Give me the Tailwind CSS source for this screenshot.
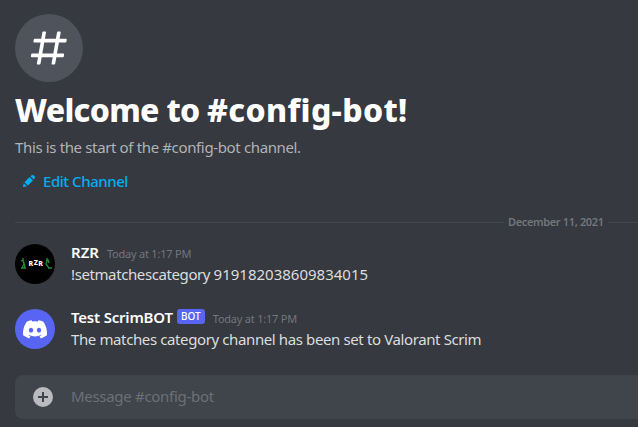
<!DOCTYPE html>
<html lang="en">
<head>
<meta charset="utf-8">
<title>config-bot</title>
<script src="https://cdn.jsdelivr.net/npm/@tailwindcss/browser@4"></script>
</head>
<body class="h-[427px] w-[638px] overflow-hidden bg-[#36393f] font-['Noto_Sans','Open_Sans',sans-serif] whitespace-nowrap">
<main class="flex h-full flex-col pt-[14px] pl-[15px]">
  <div class="flex size-[68px] shrink-0 items-center justify-center rounded-full bg-[#4f545c]">
    <svg class="size-[44px]" viewBox="0 0 24 24" fill="#fff"><path fill-rule="evenodd" clip-rule="evenodd" d="M5.88657 21C5.57547 21 5.3399 20.7189 5.39427 20.4126L6.00001 17H2.59511C2.28449 17 2.04905 16.7198 2.10259 16.4138L2.27759 15.4138C2.31946 15.1746 2.52722 15 2.77011 15H6.35001L7.41001 9H4.00511C3.69449 9 3.45905 8.71977 3.51259 8.41381L3.68759 7.41381C3.72946 7.17456 3.93722 7 4.18011 7H7.76001L8.39677 3.41262C8.43914 3.17391 8.64664 3 8.88907 3H9.87344C10.1845 3 10.4201 3.28107 10.3657 3.58738L9.76001 7H15.76L16.3968 3.41262C16.4391 3.17391 16.6466 3 16.8891 3H17.8734C18.1845 3 18.4201 3.28107 18.3657 3.58738L17.76 7H21.1649C21.4755 7 21.711 7.28023 21.6574 7.58619L21.4824 8.58619C21.4406 8.82544 21.2328 9 20.9899 9H17.41L16.35 15H19.7549C20.0655 15 20.301 15.2802 20.2474 15.5862L20.0724 16.5862C20.0306 16.8254 19.8228 17 19.5799 17H16L15.3632 20.5874C15.3209 20.8261 15.1134 21 14.8709 21H13.8866C13.5755 21 13.3399 20.7189 13.3943 20.4126L14 17H8.00001L7.36325 20.5874C7.32088 20.8261 7.11337 21 6.87094 21H5.88657ZM9.41001 9L8.35001 15H14.35L15.41 9H9.41001Z"/></svg>
  </div>
  <h1 class="mt-2 h-10 shrink-0 text-[32px] leading-[40px] font-extrabold text-white"><span class="tracking-[-0.7px]">Welcome to </span><span class="tracking-[0.35px]">#config-bot!</span></h1>
  <p class="mt-[7px] h-5 shrink-0 text-[15px] leading-5 text-[#b0b3b7]"><span class="tracking-[-0.36px]">This is the start of the #config-bot channel.</span></p>
  <div class="mt-[14px] flex h-5 shrink-0 items-center pl-[6px] text-[15px] leading-5 font-medium text-[#00aff4]">
    <svg class="mr-[6px] size-4" viewBox="0 0 24 24" fill="currentColor"><path fill-rule="evenodd" clip-rule="evenodd" d="M19.2929 9.8299L19.9409 9.18278C21.353 7.77064 21.353 5.47197 19.9409 4.05892C18.5287 2.64678 16.2292 2.64678 14.817 4.05892L14.1699 4.70694L19.2929 9.8299ZM12.8962 5.97688L5.18469 13.6906L10.3085 18.813L18.0201 11.0992L12.8962 5.97688ZM4.11851 20.9704L8.75906 19.8112L4.18692 15.239L3.02678 19.8796C2.95028 20.1856 3.04028 20.5105 3.26349 20.7337C3.48669 20.9569 3.8116 21.046 4.11851 20.9704Z"/></svg>
    <span class="tracking-[-0.45px]">Edit Channel</span>
  </div>
  <div class="mt-[24px] flex h-[14px] shrink-0 items-center text-[11px] leading-[14px] font-semibold text-[#72767d]">
    <i class="mr-1 h-px w-[489px] bg-[#42454a]"></i><span class="w-[96px] tracking-[-0.35px]">December 11, 2021</span><i class="ml-1 h-px flex-1 bg-[#42454a]"></i>
  </div>
  <article class="mt-[12px] flex h-[44px] shrink-0">
    <svg class="mt-[3px] mr-4 size-10 shrink-0" viewBox="0 0 40 40"><circle cx="20" cy="20" r="20" fill="#000"/><g font-family="Noto Sans, sans-serif" font-size="7" font-weight="800" fill="#fff"><text x="13.5" y="22">R</text><text x="18.7" y="21">Z</text><text x="23.2" y="21.5">R</text></g><g fill="none" stroke="#238b3c" stroke-width="1.3"><path d="M8 14v3l1 3-2 4M9 19l1 5M6 17l2-1 1 3M6 24h5"/><path d="M32 14v3l-1 3 3 4M31 17l2-1 1 3M33 24h4"/></g></svg>
    <div>
      <div class="flex h-[22px] items-baseline text-[15px] leading-[22px]"><span class="font-semibold text-white">RZR</span><time class="ml-2 text-[11px] text-[#72767d] tracking-[-0.22px]">Today at 1:17 PM</time></div>
      <p class="h-[22px] text-[15px] leading-[22px] text-[#dcddde]"><span class="tracking-[-0.4px]">!setmatchescategory </span><span class="tracking-[0px]">919182038609834015</span></p>
    </div>
  </article>
  <article class="mt-[21px] flex h-[44px] shrink-0">
    <svg class="mt-[3px] mr-4 size-10 shrink-0" viewBox="0 0 40 40"><circle cx="20" cy="20" r="20" fill="#5865f2"/><g transform="translate(8 11.2) scale(.189)"><path fill="#fff" d="M107.7 8.07A105.15 105.15 0 0 0 81.47 0a72.06 72.06 0 0 0-3.36 6.83 97.68 97.68 0 0 0-29.11 0A72.37 72.37 0 0 0 45.64 0 105.89 105.89 0 0 0 19.39 8.09C2.79 32.65-1.71 56.6.54 80.21a105.73 105.73 0 0 0 32.17 16.15 77.7 77.7 0 0 0 6.89-11.11 68.42 68.42 0 0 1-10.85-5.18c.91-.66 1.8-1.34 2.66-2a75.57 75.57 0 0 0 64.32 0c.87.71 1.76 1.39 2.66 2a68.68 68.68 0 0 1-10.87 5.19 77 77 0 0 0 6.89 11.1 105.25 105.25 0 0 0 32.19-16.14c2.64-27.38-4.51-51.11-18.9-72.15ZM42.45 65.69C36.18 65.69 31 60 31 53s5-12.74 11.43-12.74S54 46 53.89 53s-5.05 12.69-11.44 12.69Zm42.24 0C78.41 65.69 73.25 60 73.25 53s5-12.74 11.44-12.74S96.23 46 96.12 53s-5.04 12.69-11.43 12.69Z"/></g></svg>
    <div>
      <div class="flex h-[22px] items-baseline text-[15px] leading-[22px]"><span class="font-semibold text-white tracking-[-0.2px]">Test ScrimBOT</span><span class="mt-[3px] ml-1 h-[15px] w-[28px] self-start rounded-[3px] bg-[#5865f2] text-center text-[10px] leading-[15px] font-medium text-white">BOT</span><time class="ml-2 text-[11px] text-[#72767d] tracking-[-0.22px]">Today at 1:17 PM</time></div>
      <p class="h-[22px] text-[15px] leading-[22px] text-[#dcddde]"><span class="tracking-[-0.385px]">The matches category channel has been set to Valorant Scrim</span></p>
    </div>
  </article>
  <div class="mt-[25px] flex h-[44px] shrink-0 items-center rounded-l-lg bg-[#40444b] pl-4 text-[15px] text-[#6b7078]">
    <svg class="mr-4 size-6" viewBox="0 0 24 24" fill="#b9bbbe"><path d="M12 2a10 10 0 1 0 0 20 10 10 0 0 0 0-20Zm5 11h-4v4h-2v-4H7v-2h4V7h2v4h4Z"/></svg>
    <span class="-mt-[2px] tracking-[-0.3px]">Message #config-bot</span>
  </div>
</main>
</body>
</html>
